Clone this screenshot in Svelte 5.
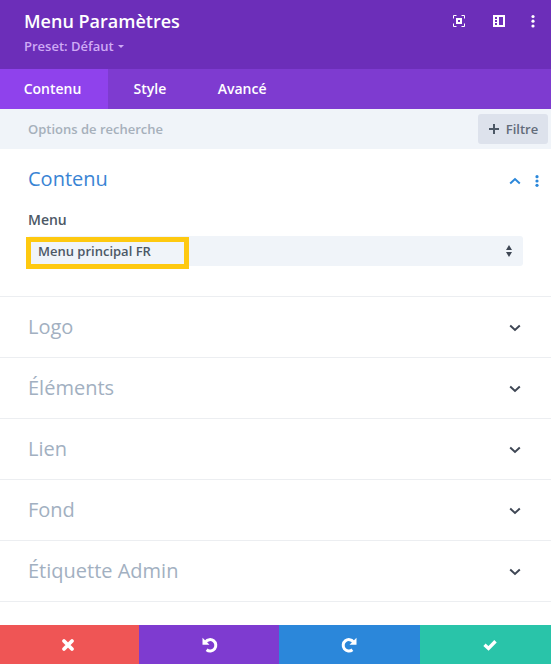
<script>
  let activeTab = "Contenu";
  let search = "";

  const tabs = ["Contenu", "Style", "Avancé"];
  const sections = ["Logo", "Éléments", "Lien", "Fond", "Étiquette Admin"];
</script>

<div class="modal">
  <header class="header">
    <div class="heading">
      <h2>Menu Paramètres</h2>
      <div class="preset">Preset: Défaut <span class="caret"></span></div>
    </div>
    <div class="header-icons">
      <svg width="12" height="12" viewBox="0 0 12 12">
        <path d="M.5 3.5v-3h3M8.5.5h3v3M11.5 8.5v3h-3M3.5 11.5h-3v-3" fill="none" stroke="#fff" />
        <path d="M4 4h4v4H4z" fill="none" stroke="#fff" stroke-width="2" />
      </svg>
      <svg width="12" height="12" viewBox="0 0 12 12">
        <path fill="#fff" fill-rule="evenodd" d="M0 0h12v12H0zM6 2v8h4V2zM2 2v2h2V2zM2 5v2h2V5zM2 8v2h2V8z" />
      </svg>
      <svg width="4" height="14" viewBox="0 0 4 14">
        <g fill="#fff"><circle cx="2" cy="2.5" r="1.6" /><circle cx="2" cy="7.2" r="1.6" /><circle cx="2" cy="12" r="1.6" /></g>
      </svg>
    </div>
  </header>

  <nav class="tabs">
    {#each tabs as tab}
      <button class="tab" class:active={activeTab === tab} on:click={() => (activeTab = tab)}>{tab}</button>
    {/each}
  </nav>

  <div class="search-bar">
    <input type="text" placeholder="Options de recherche" bind:value={search} />
    <button class="filter">
      <svg width="10" height="10" viewBox="0 0 10 10">
        <path d="M5 0v10M0 5h10" stroke="#4c5866" stroke-width="2" />
      </svg>
      Filtre
    </button>
  </div>

  <section class="open-section">
    <div class="section-title">
      <h3>Contenu</h3>
      <svg class="chevron" width="12" height="8" viewBox="0 0 12 8">
        <path d="M1.2 6.4 6 2l4.8 4.4" fill="none" stroke="#2b87da" stroke-width="2" />
      </svg>
      <svg class="dots" width="4" height="12" viewBox="0 0 4 12">
        <g fill="#2b87da"><circle cx="2" cy="1.7" r="1.6" /><circle cx="2" cy="6" r="1.6" /><circle cx="2" cy="10.3" r="1.6" /></g>
      </svg>
    </div>
    <div class="label">Menu</div>
    <div class="select">
      <span>Menu principal FR</span>
      <svg width="6" height="12" viewBox="0 0 6 12">
        <path d="M0 5 3 0l3 5zM0 7h6l-3 5z" fill="#3e4654" />
      </svg>
      <div class="highlight"></div>
    </div>
  </section>

  {#each sections as section}
    <section class="row">
      <h3>{section}</h3>
      <svg width="12" height="8" viewBox="0 0 12 8">
        <path d="M1.2 1.6 6 6l4.8-4.4" fill="none" stroke="#3e4654" stroke-width="2" />
      </svg>
    </section>
  {/each}

  <footer class="footer">
    <button class="cancel" aria-label="Annuler">
      <svg width="14" height="14" viewBox="0 0 14 14">
        <path d="m3 3 8 8M11 3l-8 8" stroke="#fff" stroke-width="3.8" stroke-linecap="round" />
      </svg>
    </button>
    <button class="undo" aria-label="Défaire">
      <svg width="16" height="16" viewBox="0 0 16 16">
        <path d="M3.6 4.8A5.7 5.7 0 1 1 4.6 12.8" fill="none" stroke="#fff" stroke-width="3" />
        <path d="M.5.8v7h7z" fill="#fff" />
      </svg>
    </button>
    <button class="redo" aria-label="Refaire">
      <svg width="16" height="16" viewBox="0 0 16 16">
        <g transform="matrix(-1 0 0 1 16 0)">
          <path d="M3.6 4.8A5.7 5.7 0 1 1 4.6 12.8" fill="none" stroke="#fff" stroke-width="3" />
          <path d="M.5.8v7h7z" fill="#fff" />
        </g>
      </svg>
    </button>
    <button class="save" aria-label="Enregistrer">
      <svg width="14" height="12" viewBox="0 0 14 12">
        <path d="m1.5 5.8 4 3.7 7-7.2" fill="none" stroke="#fff" stroke-width="3.4" />
      </svg>
    </button>
  </footer>
</div>

<style>
  :global(body) {
    margin: 0;
  }

  .modal {
    display: flex;
    flex-direction: column;
    height: 664px;
    background: #fff;
    font-family: "Open Sans", "Noto Sans", sans-serif;
    font-size: 13px;
    font-weight: 600;
    overflow: hidden;
  }

  h2,
  h3 {
    margin: 0;
  }

  svg {
    display: block;
    flex: none;
  }

  button {
    margin: 0;
    padding: 0;
    border: 0;
    font: inherit;
    cursor: pointer;
  }

  .header {
    display: flex;
    justify-content: space-between;
    box-sizing: border-box;
    height: 69px;
    padding: 9px 17px 0 24px;
    background: #6c2eb9;
    color: #fff;
  }

  h2 {
    font-size: 18px;
    font-weight: 600;
    line-height: 25px;
  }

  .preset {
    display: flex;
    align-items: center;
    gap: 4px;
    color: #cfaaf5;
    line-height: 24px;
  }

  .caret {
    margin-top: 1px;
    border: 3px solid transparent;
    border-top-color: #cfaaf5;
    border-bottom: 0;
  }

  .header-icons {
    display: flex;
    align-items: center;
    gap: 28px;
    height: 24px;
  }

  .header-icons svg:last-child {
    margin: 0 -1px 0 -2px;
  }

  .tabs {
    display: flex;
    height: 40px;
    background: #7e3bd0;
  }

  .tab {
    padding: 0 26px 2px 25.5px;
    background: none;
    color: #fff;
    font-size: 14px;
  }

  .tab.active {
    width: 108px;
    padding: 0 3px 2px 0;
    background: #8f42ec;
  }

  .search-bar {
    display: flex;
    align-items: center;
    justify-content: space-between;
    height: 40px;
    padding: 0 3px 0 28px;
    background: #f0f4f9;
  }

  input {
    width: 300px;
    padding: 0;
    border: 0;
    outline: 0;
    background: none;
    color: #4c5866;
    font: inherit;
  }

  input::placeholder {
    color: #a6b0bb;
    opacity: 1;
  }

  .filter {
    display: flex;
    align-items: center;
    justify-content: center;
    gap: 7px;
    box-sizing: border-box;
    width: 70px;
    height: 30px;
    padding-left: 1px;
    border-radius: 3px;
    background: #dde2ec;
    color: #626c7a;
  }

  .open-section {
    box-sizing: border-box;
    height: 148px;
    padding: 16px 28px 0;
    border-bottom: 1px solid #eceef1;
  }

  .section-title {
    display: flex;
    align-items: center;
    height: 28px;
    margin-right: -17px;
  }

  h3 {
    flex: 1;
    padding-bottom: 2px;
    color: #a2b0c1;
    font-size: 20px;
    font-weight: 400;
  }

  .open-section h3 {
    color: #3984d4;
  }

  .chevron {
    margin: 4px 14px 0 0;
  }

  .dots {
    margin-top: 3px;
    margin-right: 1px;
  }

  .label {
    margin-top: 17px;
    color: #4c5866;
    font-size: 14px;
    line-height: 20px;
  }

  .select {
    position: relative;
    display: flex;
    align-items: center;
    justify-content: space-between;
    height: 30px;
    margin-top: 6px;
    padding: 0 11px 0 10px;
    border-radius: 3px;
    background: #f0f4f9;
    color: #4c5866;
  }

  .highlight {
    position: absolute;
    top: 1px;
    left: -2px;
    box-sizing: border-box;
    width: 163px;
    height: 32px;
    border: 5px solid #fec910;
  }

  .row {
    display: flex;
    align-items: center;
    box-sizing: border-box;
    height: 61px;
    padding: 0 30px 0 28px;
    border-bottom: 1px solid #eceef1;
  }

  .row svg {
    margin-top: 2px;
  }

  .footer {
    display: grid;
    grid-template-columns: 139px 140px 141px 131px;
    height: 39px;
    margin-top: auto;
  }

  .footer button {
    display: flex;
    align-items: center;
    justify-content: center;
  }

  .footer .cancel {
    padding-right: 3px;
    background: #ef5555;
  }

  .footer .undo {
    padding-left: 1px;
    background: #7e3bd0;
  }

  .footer .redo {
    padding-right: 1px;
    background: #2b87da;
  }

  .footer .save {
    padding-left: 8px;
    background: #29c4a9;
  }
</style>
